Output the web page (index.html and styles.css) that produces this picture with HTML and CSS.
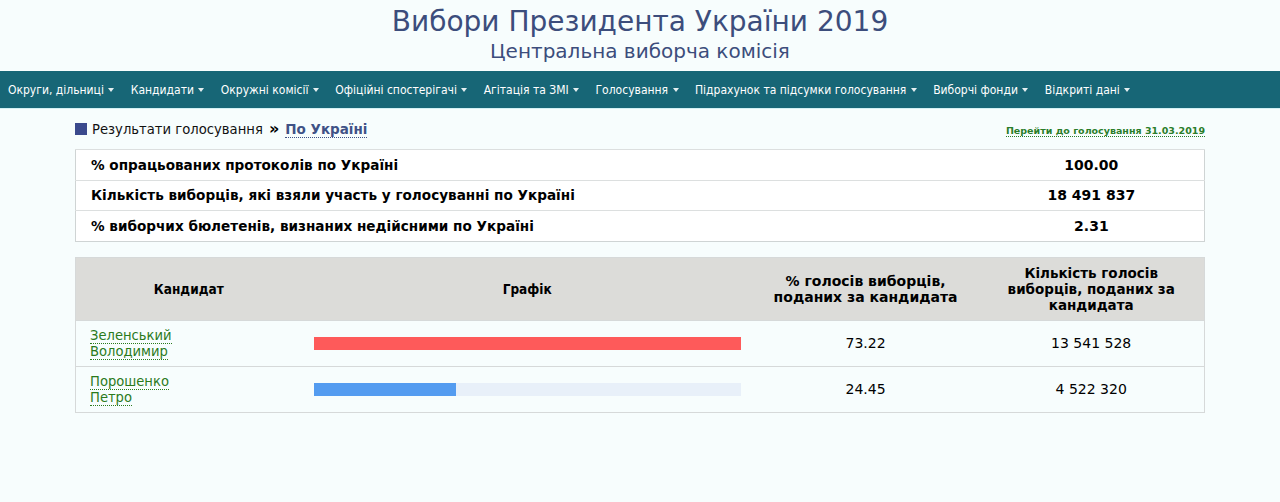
FILE: index.html
```html
<!DOCTYPE html>
<html lang="uk">
<head>
<meta charset="utf-8">
<title>Вибори Президента України 2019</title>
<link rel="stylesheet" href="styles.css">
</head>
<body>
<header class="site-header">
  <h1 class="site-title">Вибори Президента України 2019</h1>
  <div class="site-subtitle">Центральна виборча комісія</div>
</header>
<nav class="main-nav">
  <ul class="nav-list">
    <li class="nav-item">Округи, дільниці <span class="caret"></span></li>
    <li class="nav-item">Кандидати <span class="caret"></span></li>
    <li class="nav-item">Окружні комісії <span class="caret"></span></li>
    <li class="nav-item">Офіційні спостерігачі <span class="caret"></span></li>
    <li class="nav-item">Агітація та ЗМІ <span class="caret"></span></li>
    <li class="nav-item">Голосування <span class="caret"></span></li>
    <li class="nav-item">Підрахунок та підсумки голосування <span class="caret"></span></li>
    <li class="nav-item">Виборчі фонди <span class="caret"></span></li>
    <li class="nav-item">Відкриті дані <span class="caret"></span></li>
  </ul>
</nav>
<main class="content">
  <div class="crumbs-row">
    <div class="crumbs">
      <span class="crumb-square"></span>
      <span class="crumb-text">Результати голосування</span>
      <span class="crumb-sep">»</span>
      <a class="crumb-link" href="#">По Україні</a>
    </div>
    <a class="prev-link" href="#">Перейти до голосування 31.03.2019</a>
  </div>

  <table class="summary">
    <tr><td class="sum-label">% опрацьованих протоколів по Україні</td><td class="sum-value">100.00</td></tr>
    <tr><td class="sum-label">Кількість виборців, які взяли участь у голосуванні по Україні</td><td class="sum-value">18 491 837</td></tr>
    <tr><td class="sum-label">% виборчих бюлетенів, визнаних недійсними по Україні</td><td class="sum-value">2.31</td></tr>
  </table>

  <table class="results">
    <thead>
      <tr>
        <th class="col-cand narrow-font">Кандидат</th>
        <th class="col-chart narrow-font">Графік</th>
        <th class="col-pct">% голосів виборців,<br>поданих за кандидата</th>
        <th class="col-cnt">Кількість голосів<br>виборців, поданих за<br>кандидата</th>
      </tr>
    </thead>
    <tbody>
      <tr>
        <td class="cand"><a href="#" class="cand-link">Зеленський</a><br><a href="#" class="cand-link">Володимир</a></td>
        <td class="chart"><div class="bar-track"><div class="bar bar-red" style="width:100%"></div></div></td>
        <td class="num">73.22</td>
        <td class="num">13 541 528</td>
      </tr>
      <tr>
        <td class="cand"><a href="#" class="cand-link">Порошенко</a><br><a href="#" class="cand-link">Петро</a></td>
        <td class="chart"><div class="bar-track"><div class="bar bar-blue" style="width:33.4%"></div></div></td>
        <td class="num">24.45</td>
        <td class="num">4 522 320</td>
      </tr>
    </tbody>
  </table>
</main>
</body>
</html>
```
FILE: styles.css
```css
html, body {
  margin: 0;
  padding: 0;
  background: #f7fdfd;
}
body {
  font-family: "DejaVu Sans", Verdana, sans-serif;
  color: #000;
}
.site-header {
  text-align: center;
  padding-top: 5px;
  height: 65px;
  box-sizing: border-box;
}
.site-title {
  margin: 0;
  font-weight: normal;
  font-size: 28px;
  line-height: 34px;
  color: #3c4d7c;
}
.site-subtitle {
  font-size: 20px;
  line-height: 24px;
  color: #3c4d7c;
}
.main-nav {
  background: #176676;
  height: 37px;
  margin-top: 6px;
  border-bottom: 1px solid #d2f0f4;
}
.nav-list {
  list-style: none;
  margin: 0;
  padding: 0 0 0 8px;
  display: flex;
  gap: 16.4px;
  height: 37px;
  align-items: center;
}
.nav-item {
  font-family: "DejaVu Sans Condensed", Tahoma, sans-serif;
  font-size: 12px;
  color: #fff;
  white-space: nowrap;
}
.caret {
  display: inline-block;
  width: 0;
  height: 0;
  border-left: 3.5px solid transparent;
  border-right: 3.5px solid transparent;
  border-top: 4px solid #e4eef0;
  vertical-align: middle;
  margin-left: 1px;
}
.content {
  width: 1130px;
  margin: 0 auto;
  padding-top: 11px;
}
.crumbs-row {
  display: flex;
  justify-content: space-between;
  align-items: center;
  height: 18px;
}
.crumbs {
  display: flex;
  align-items: center;
  font-size: 13.2px;
}
.crumb-square {
  width: 12px;
  height: 12px;
  background: #3b4a8d;
  margin-right: 5px;
}
.crumb-text {
  color: #111;
}
.crumb-sep {
  font-weight: bold;
  font-size: 16px;
  margin: 0 6px 0 6px;
  line-height: 12px;
}
.crumb-link {
  color: #3f5286;
  font-weight: bold;
  font-size: 13.5px;
  text-decoration: none;
  border-bottom: 1px dotted #3f5286;
}
.prev-link {
  font-size: 9.5px;
  font-weight: bold;
  color: #2a7d2a;
  text-decoration: none;
  border-bottom: 1px dotted #2a7d2a;
  margin-top: 4px;
}
.summary {
  width: 100%;
  border-collapse: collapse;
  margin-top: 11px;
  border: 1px solid #cfd4d4;
  background: #fff;
}
.summary td {
  border-top: 1px solid #dcdfdf;
  height: 29.6px;
  padding: 0;
  font-size: 13.6px;
  font-weight: bold;
}
.sum-label {
  padding-left: 15px !important;
}
.sum-value {
  width: 20%;
  text-align: center;
  font-size: 14px !important;
}
.results {
  width: 100%;
  border-collapse: collapse;
  margin-top: 15px;
  border: 1px solid #d6d9d9;
  table-layout: fixed;
}
.results th {
  background: #dcdcd9;
  height: 62px;
  padding: 0;
  font-size: 13.5px;
  font-weight: bold;
  line-height: 16px;
}
.results th.col-pct {
  font-size: 14px;
}
.results th.narrow-font {
  font-family: "DejaVu Sans Condensed", Tahoma, sans-serif;
  font-size: 13.5px;
}
.col-cand { width: 20%; }
.col-chart { width: 40%; }
.col-pct { width: 20%; }
.col-cnt { width: 20%; }
.results td {
  height: 45px;
  border-top: 1px solid #d6d9d9;
  padding: 0;
}
.cand {
  padding-left: 14px !important;
  font-family: "DejaVu Sans Condensed", Tahoma, sans-serif;
  font-size: 14.6px;
  line-height: 16px;
}
.cand-link {
  color: #2b7a1c;
  text-decoration: none;
  border-bottom: 1px dotted #2b7a1c;
}
.chart {
  padding: 0 12px !important;
}
.bar-track {
  height: 13px;
  background: transparent;
}
.results tr + tr .bar-track {
  background: #e8f0f9;
}
.bar {
  height: 100%;
}
.bar-red { background: #fe5a5a; }
.bar-blue { background: #549cf0; }
.num {
  text-align: center;
  font-size: 14px;
}
```
